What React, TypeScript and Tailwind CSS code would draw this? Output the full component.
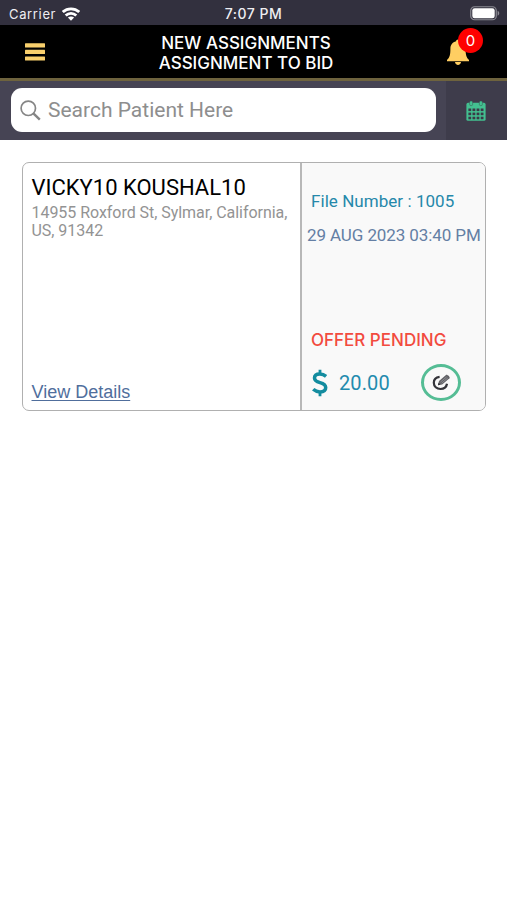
import type { ReactNode } from "react";

interface Assignment {
  name: string;
  address: string[];
  fileNumber: string;
  date: string;
  status: string;
  amount: string;
}

const ASSIGNMENTS: Assignment[] = [
  {
    name: "VICKY10 KOUSHAL10",
    address: ["14955 Roxford St, Sylmar, California,", "US, 91342"],
    fileNumber: "1005",
    date: "29 AUG 2023 03:40 PM",
    status: "OFFER PENDING",
    amount: "20.00",
  },
];

function WifiIcon() {
  return (
    <svg width="18" height="14" viewBox="0 0 18 14" fill="none" stroke="white" strokeWidth="2.8">
      <path d="M0.8 5C5.4 0.7 12.6 0.7 17.2 5" />
      <path d="M3.7 8.5C6.7 5.6 11.3 5.6 14.3 8.5" />
      <path d="M9 13.8L5.9 10.6C7.6 9.1 10.4 9.1 12.1 10.6Z" fill="white" stroke="none" />
    </svg>
  );
}

function BatteryIcon() {
  return (
    <svg width="30" height="15" viewBox="0 0 30 15">
      <rect x="0.75" y="0.75" width="25.5" height="13" rx="3.8" fill="none" stroke="#8b8a93" strokeWidth="1.2" />
      <rect x="2.3" y="2.3" width="22.4" height="9.9" rx="2.3" fill="white" />
      <path d="M27.6 4.8C29.8 5.6 29.8 8.9 27.6 9.7Z" fill="#8b8a93" />
    </svg>
  );
}

function MenuIcon() {
  return (
    <svg width="20" height="18" viewBox="0 0 20 18" fill="#f8cf6c">
      <rect width="20" height="4.2" y="0.2" rx="0.5" />
      <rect width="20" height="4.2" y="6.8" rx="0.5" />
      <rect width="20" height="4.2" y="13.4" rx="0.5" />
    </svg>
  );
}

function BellIcon() {
  return (
    <svg width="22" height="26" viewBox="0 0 22 26" fill="#ffce62">
      <path d="M11 0.5C12.1 0.5 12.9 1.2 12.9 2.3C16.6 3.1 18.6 6 18.6 9.8C18.6 16.5 19.5 18.6 22 21V22.3H0V21C2.5 18.6 3.4 16.5 3.4 9.8C3.4 6 5.4 3.1 9.1 2.3C9.1 1.2 9.9 0.5 11 0.5Z" />
      <path d="M8 23H14C13.8 24.8 12.6 25.9 11 25.9C9.4 25.9 8.2 24.8 8 23Z" />
    </svg>
  );
}

function SearchIcon() {
  return (
    <svg width="21" height="21" viewBox="0 0 21 21" fill="none" stroke="#858585">
      <circle cx="8.3" cy="8.3" r="7.2" strokeWidth="1.7" />
      <path d="M13.6 13.6L19.8 19.6" strokeWidth="2.4" />
    </svg>
  );
}

function CalendarIcon() {
  const columns = [2.4, 6.5, 10.6, 14.7];
  const rows = [7.5, 11.6, 15.7];
  return (
    <svg width="20" height="20" viewBox="0 0 20 20">
      <rect x="0.4" y="1.8" width="19.2" height="18" rx="1.6" fill="#43c090" />
      <rect x="3.6" y="0" width="3" height="4.6" rx="1.2" fill="#43c090" stroke="#3b3947" strokeWidth="0.4" />
      <rect x="13.4" y="0" width="3" height="4.6" rx="1.2" fill="#43c090" stroke="#3b3947" strokeWidth="0.4" />
      {rows.map((y) =>
        columns.map((x) => <rect key={`${x}-${y}`} x={x} y={y} width="2.8" height="2.6" fill="#3b3947" />)
      )}
    </svg>
  );
}

function DollarIcon() {
  return (
    <svg width="16" height="28" viewBox="0 0 16 28" fill="none" stroke="#138c9f">
      <path d="M8 0.8V5M8 22.5V27.2" strokeWidth="2.8" />
      <path d="M14.1 7.3C12.2 5.7 10.2 5 7.8 5C4.6 5 2.5 6.5 2.5 9C2.5 11.7 4.6 12.7 8 13.6C11.8 14.6 13.7 15.8 13.7 18.5C13.7 21.3 11.4 22.9 8 22.9C5.3 22.9 3.1 22 1.2 20.3" strokeWidth="3.5" />
    </svg>
  );
}

function EditIcon() {
  return (
    <svg width="19" height="17" viewBox="0 0 19 17" fill="none">
      <path d="M7.6 2.9C4.2 3.3 1.8 5.5 1.8 8.8C1.8 12.4 4.7 15 8.5 15C11.9 15 14.5 12.9 15 9.8" stroke="#34343a" strokeWidth="2.2" />
      <path d="M5.9 11.2L7 7.1L14 0.9C15.2 0.2 18.5 3 17.5 4.3L10.2 10.5Z" fill="#626267" />
      <path d="M8.4 8.2L14.6 2.9M9.6 9.2L15.8 4" stroke="#aaaaae" strokeWidth="0.6" />
      <path d="M5.9 11.2L6.6 8.7L8.4 10.8Z" fill="#2f2f35" />
    </svg>
  );
}

function StatusBar() {
  return (
    <div className="grid h-[25px] grid-cols-3 items-center bg-[#32303e] pt-[2px] font-['Inter',sans-serif] text-[13px] leading-4 text-[#eeeef2]">
      <div className="flex items-center gap-[6px] pl-[9px]">
        <span className="tracking-[0.65px]">Carrier</span>
        <WifiIcon />
      </div>
      <span className="text-center text-[14px] font-medium tracking-[0.5px]">7:07 PM</span>
      <div className="flex justify-end pr-[7px]">
        <BatteryIcon />
      </div>
    </div>
  );
}

function Header({ children }: { children: ReactNode }) {
  return (
    <header className="grid h-[56px] grid-cols-[100px_1fr_100px] border-b-[3px] border-[#6e633e] bg-black">
      <button type="button" aria-label="Menu" className="flex items-center pl-[25px]">
        <MenuIcon />
      </button>
      <h1 className="mt-[8px] -ml-[15px] text-center font-['Inter',sans-serif] text-[17px] leading-[20px] font-medium text-white">
        {children}
      </h1>
      <button type="button" aria-label="Notifications" className="relative mt-[14px] ml-[40px] h-[26px] w-[22px]">
        <BellIcon />
        <span className="absolute -top-[11px] left-[11px] flex size-[25px] items-center justify-center rounded-full bg-[#fe0000] font-['Inter',sans-serif] text-[15px] leading-none text-white">
          0
        </span>
      </button>
    </header>
  );
}

function SearchBar() {
  return (
    <div className="flex h-[59px] bg-[#464454]">
      <div className="mt-[7px] ml-[11px] flex h-[44px] w-[425px] items-center gap-[7px] rounded-[11px] bg-white pl-[9px]">
        <SearchIcon />
        <span className="font-['Roboto',sans-serif] text-[21px] leading-6 text-[#8e8e8e]">Search Patient Here</span>
      </div>
      <button type="button" aria-label="Calendar" className="ml-[10px] flex flex-1 items-center justify-center bg-[#3e3c4b] pr-px">
        <CalendarIcon />
      </button>
    </div>
  );
}

function AssignmentCard({ item }: { item: Assignment }) {
  return (
    <article className="flex h-[249px] w-[464px] overflow-hidden rounded-[7px] border-[1.5px] border-[#b0b0b0] bg-white font-['Roboto',sans-serif]">
      <div className="flex w-[277px] flex-col pt-[11px] pl-[8.5px]">
        <h2 className="text-[22px] leading-[28px] whitespace-nowrap text-black">{item.name}</h2>
        <p className="mt-[2px] text-[16px] leading-[18px] tracking-[-0.04px] whitespace-nowrap text-[#939393]">
          {item.address.map((line) => (
            <span key={line} className="block">{line}</span>
          ))}
        </p>
        <a href="#" className="mt-auto mb-[7px] self-start font-['Liberation_Sans',sans-serif] text-[18px] leading-[22px] text-[#506e9c] underline decoration-1 underline-offset-2">
          View Details
        </a>
      </div>
      <div className="flex flex-1 flex-col border-l-2 border-[#b8b8b8] bg-[#f9f9f9]">
        <p className="mt-[28px] pl-[9px] text-[17px] leading-[20px] tracking-[0.05px] whitespace-nowrap text-[#2588aa]">File Number : {item.fileNumber}</p>
        <p className="mt-[14px] pl-[5px] text-[17px] leading-[20px] tracking-[-0.1px] whitespace-nowrap text-[#647fa4]">{item.date}</p>
        <p className="mt-auto pl-[9px] font-['Inter',sans-serif] text-[17px] leading-[20px] font-medium whitespace-nowrap text-[#f24b3f]">{item.status}</p>
        <div className="mt-[14px] mb-[9px] flex h-[37px] items-center pl-[10px]">
          <DollarIcon />
          <span className="mt-px ml-[11px] w-[82px] text-[20px] leading-6 tracking-[0.1px] text-[#238bae]">{item.amount}</span>
          <button type="button" aria-label="Edit offer" className="flex h-[37px] w-[40px] items-center justify-center rounded-[50%] border-[3px] border-[#55bd95]">
            <EditIcon />
          </button>
        </div>
      </div>
    </article>
  );
}

export default function App() {
  return (
    <div className="h-[900px] w-[507px] overflow-hidden bg-white">
      <StatusBar />
      <Header>
        NEW ASSIGNMENTS
        <br />
        ASSIGNMENT TO BID
      </Header>
      <SearchBar />
      <main className="pt-[22px] pl-[22px]">
        {ASSIGNMENTS.map((item) => (
          <AssignmentCard key={item.fileNumber} item={item} />
        ))}
      </main>
    </div>
  );
}
